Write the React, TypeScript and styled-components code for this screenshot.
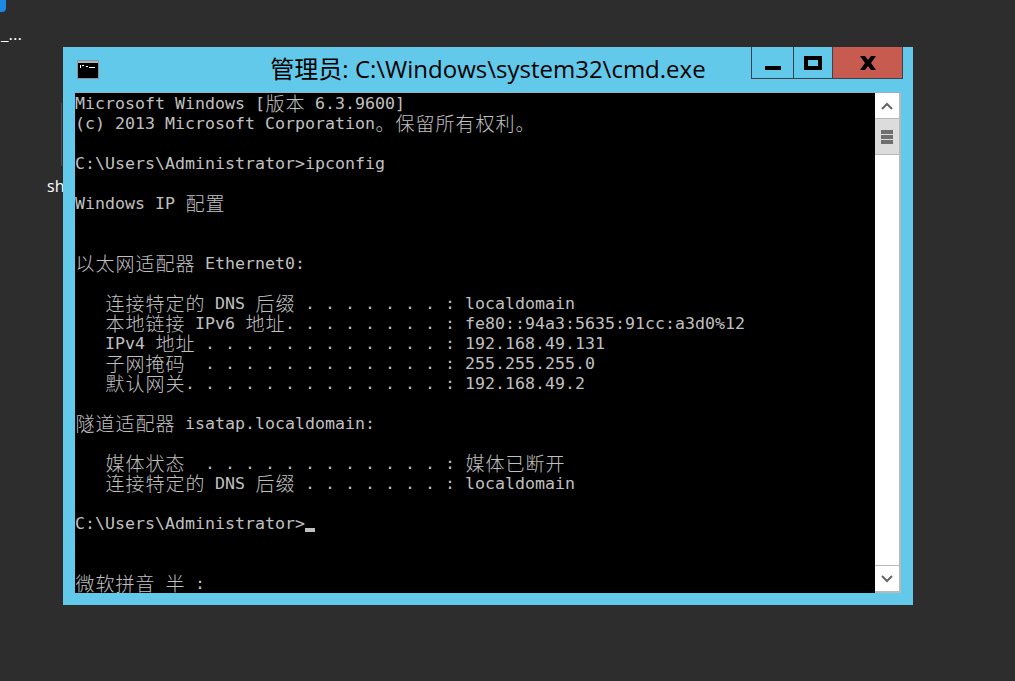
import React from 'react'
import styled, { createGlobalStyle } from 'styled-components'

const GlobalStyle = createGlobalStyle`
  html, body {
    margin: 0;
    padding: 0;
    background: #2d2d2d;
    overflow: hidden;
  }
`

const Desktop = styled.div`
  position: relative;
  width: 1015px;
  height: 681px;
  background: #2d2d2d;
  overflow: hidden;
`

const DesktopIconCorner = styled.div`
  position: absolute;
  left: 0;
  top: 0;
  width: 6px;
  height: 12px;
  background: #1e88e5;
  border-bottom-right-radius: 4px;
`

const DesktopLabel = styled.span<{ $x: number; $y: number; $size: number }>`
  position: absolute;
  left: ${p => p.$x}px;
  top: ${p => p.$y}px;
  color: #ffffff;
  font-family: "Open Sans", "Liberation Sans", sans-serif;
  font-size: ${p => p.$size}px;
  line-height: 1;
`

const DesktopDivider = styled.div`
  position: absolute;
  left: 61px;
  top: 103px;
  width: 1px;
  height: 63px;
  background: #4f4f4f;
`

const Window = styled.div`
  position: absolute;
  left: 63px;
  top: 47px;
  width: 850px;
  height: 558px;
  box-sizing: border-box;
  padding: 0 12px 12px;
  background: #63c9ea;
  display: flex;
  flex-direction: column;
`

const TitleBar = styled.div`
  height: 46px;
  margin-right: -2px;
  flex: none;
  display: grid;
  grid-template-columns: 1fr auto 1fr;
`

const WindowIcon = styled.svg`
  width: 22px;
  height: 19px;
  margin: 13px 0 0 2px;
`

const Title = styled.div`
  padding: 7px 2px 0 0;
  color: #000000;
  font-family: "Open Sans", "Noto Sans CJK SC", sans-serif;
  font-size: 24px;
  line-height: 30px;
  white-space: nowrap;
`

const Controls = styled.div`
  justify-self: end;
  align-self: start;
  display: flex;
  height: 32px;
  box-sizing: border-box;
  border: 1px solid #3c4248;
  border-top: 0;
`

const ControlButton = styled.div<{ $width: number; $close?: boolean }>`
  width: ${p => p.$width}px;
  display: flex;
  align-items: center;
  justify-content: center;
  background: ${p => (p.$close ? '#c75b50' : 'transparent')};
  & + & {
    border-left: 1px solid #3c4248;
  }
`

const Body = styled.div`
  flex: 1;
  min-height: 0;
  display: flex;
  box-shadow: 0 -1px 0 #8fb4c4;
`

const Console = styled.div`
  width: 800px;
  height: 500px;
  background: #000000;
  overflow: hidden;
`

const ConsoleLine = styled.div`
  height: 20px;
  color: #c0c0c0;
  font-family: "DejaVu Sans Mono", "Liberation Mono", monospace;
  font-size: 16.6px;
  line-height: 22px;
  white-space: pre;
`

const Cjk = styled.span`
  display: inline-block;
  width: 20px;
  height: 20px;
  font-family: "Noto Sans CJK SC", sans-serif;
  font-size: 19px;
  font-weight: 300;
  line-height: 20px;
  text-align: center;
  vertical-align: top;
`

const Caret = styled.span`
  display: inline-block;
  width: 10px;
  height: 4px;
  background: #c0c0c0;
  vertical-align: -3px;
`

const Scrollbar = styled.div`
  width: 26px;
  height: 500px;
  box-sizing: border-box;
  background: #ffffff;
  border-right: 2px solid #b9b9b9;
  border-bottom: 2px solid #b9b9b9;
  display: flex;
  flex-direction: column;
`

const ScrollButton = styled.div`
  height: 25px;
  flex: none;
  display: flex;
  align-items: center;
  justify-content: center;
`

const ScrollThumb = styled.div`
  height: 37px;
  flex: none;
  box-sizing: border-box;
  background: #dcdcdc;
  border-top: 1px solid #b9b9b9;
  border-bottom: 1px solid #b9b9b9;
  display: flex;
  flex-direction: column;
  align-items: center;
  justify-content: center;
  gap: 1px;
`

const ThumbGrip = styled.div`
  width: 12px;
  height: 4px;
  background: #6e6e6e;
`

const ScrollTrack = styled.div`
  flex: 1;
  border-bottom: 1px solid #b9b9b9;
`

const lines = [
  'Microsoft Windows [版本 6.3.9600]',
  '(c) 2013 Microsoft Corporation。保留所有权利。',
  '',
  'C:\\Users\\Administrator>ipconfig',
  '',
  'Windows IP 配置',
  '',
  '',
  '以太网适配器 Ethernet0:',
  '',
  '   连接特定的 DNS 后缀 . . . . . . . : localdomain',
  '   本地链接 IPv6 地址. . . . . . . . : fe80::94a3:5635:91cc:a3d0%12',
  '   IPv4 地址 . . . . . . . . . . . . : 192.168.49.131',
  '   子网掩码  . . . . . . . . . . . . : 255.255.255.0',
  '   默认网关. . . . . . . . . . . . . : 192.168.49.2',
  '',
  '隧道适配器 isatap.localdomain:',
  '',
  '   媒体状态  . . . . . . . . . . . . : 媒体已断开',
  '   连接特定的 DNS 后缀 . . . . . . . : localdomain',
  '',
  'C:\\Users\\Administrator>',
  '',
  '',
  '微软拼音 半 :',
]

// every CJK glyph takes two console cells
const renderLine = (text: string) =>
  Array.from(text).map((ch, i) =>
    /[\u3000-\u9fff]/.test(ch) ? <Cjk key={i}>{ch}</Cjk> : ch
  )

const App = () => {
  return (
    <Desktop>
      <GlobalStyle />
      <DesktopIconCorner />
      <DesktopLabel $x={1} $y={25} $size={17}>_...</DesktopLabel>
      <DesktopLabel $x={47} $y={178} $size={16}>sh</DesktopLabel>
      <DesktopDivider />
      <Window>
        <TitleBar>
          <WindowIcon viewBox="0 0 22 19">
            <rect x="0.5" y="0.5" width="21" height="18" fill="#000" stroke="#8a949c" />
            <rect x="1" y="1" width="20" height="2" fill="#a8b4bc" />
            <rect x="3" y="5" width="1" height="3" fill="#fff" />
            <rect x="5" y="5" width="2" height="1" fill="#fff" />
            <rect x="9" y="6" width="2" height="1" fill="#fff" />
            <rect x="12" y="7" width="6" height="1" fill="#fff" />
          </WindowIcon>
          <Title>管理员: C:\Windows\system32\cmd.exe</Title>
          <Controls>
            <ControlButton $width={41}>
              <svg width="16" height="4" viewBox="0 0 16 4" style={{ marginTop: 10 }}>
                <rect width="16" height="4" fill="#000" />
              </svg>
            </ControlButton>
            <ControlButton $width={38}>
              <svg width="18" height="14" viewBox="0 0 18 14">
                <path d="M0 0h18v14H0zM4 4v6h10V4z" fill="#000" fillRule="evenodd" />
              </svg>
            </ControlButton>
            <ControlButton $width={69} $close>
              <svg width="16" height="14" viewBox="0 0 16 14">
                <path d="M0 0h5l3 4 3-4h5l-5 7 5 7h-5l-3-4-3 4H0l5-7z" fill="#000" />
              </svg>
            </ControlButton>
          </Controls>
        </TitleBar>
        <Body>
          <Console>
            {lines.map((line, i) => (
              <ConsoleLine key={i}>
                {renderLine(line)}
                {i === 21 && <Caret />}
              </ConsoleLine>
            ))}
          </Console>
          <Scrollbar>
            <ScrollButton>
              <svg width="12" height="8" viewBox="0 0 12 8">
                <path d="M1 7l5-5 5 5" fill="none" stroke="#666" strokeWidth="2" />
              </svg>
            </ScrollButton>
            <ScrollThumb>
              <ThumbGrip />
              <ThumbGrip />
              <ThumbGrip />
            </ScrollThumb>
            <ScrollTrack />
            <ScrollButton>
              <svg width="12" height="8" viewBox="0 0 12 8">
                <path d="M1 1l5 5 5-5" fill="none" stroke="#666" strokeWidth="2" />
              </svg>
            </ScrollButton>
          </Scrollbar>
        </Body>
      </Window>
    </Desktop>
  )
}

export default App
